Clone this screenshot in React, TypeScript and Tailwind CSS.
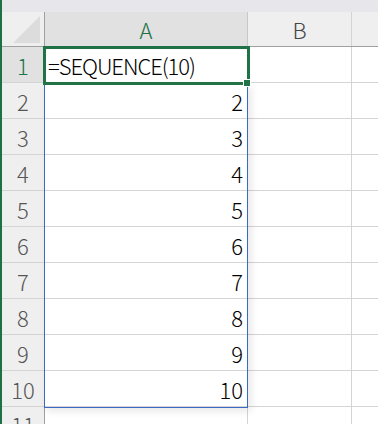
import React from "react";

const font = { fontFamily: '"Noto Sans CJK JP", "Noto Sans", sans-serif' };

export default function App() {
  const rows = [1, 2, 3, 4, 5, 6, 7, 8, 9, 10];
  return (
    <div className="w-[378px] h-[424px] overflow-hidden flex bg-white font-light" style={font}>
      <div className="w-[2px] shrink-0 bg-[#1e7145]" />
      <div className="flex-1 flex flex-col relative">
        <div className="h-[12px] shrink-0 bg-[#e6e6eb]" />
        {/* header row */}
        <div className="h-[35px] shrink-0 flex border-b border-[#a0a0a0]">
          <div className="w-[43px] shrink-0 bg-[#efefef] border-r border-[#a0a0a0] relative">
            <svg className="absolute left-[11px] top-[4px]" width="28" height="28" viewBox="0 0 28 28">
              <polygon points="0,27 27,0 27,27" fill="#dcdcdc" />
            </svg>
          </div>
          <div className="w-[203px] shrink-0 bg-[#e1e1e1] border-r border-[#c8c8c8] flex items-center justify-center text-[22px] leading-none text-[#217346]">
            A
          </div>
          <div className="w-[104px] shrink-0 bg-[#efefef] border-r border-[#d4d4d4] flex items-center justify-center text-[22px] leading-none text-[#444]">
            B
          </div>
          <div className="flex-1 bg-[#efefef]" />
        </div>
        {rows.map((r) => (
          <div key={r} className="h-[36px] shrink-0 flex border-b border-[#d4d4d4]">
            <div
              className={
                "w-[43px] shrink-0 border-r border-[#a0a0a0] flex items-center justify-center text-[22px] leading-none " +
                (r === 1 ? "bg-[#e1e1e1] text-[#217346]" : "bg-[#efefef] text-[#555]")
              }
            >
              {r}
            </div>
            <div
              className={
                "w-[203px] shrink-0 border-r border-[#d4d4d4] flex items-center text-[22px] leading-none text-black " +
                (r === 1 ? "justify-start pl-[3px] tracking-[-1.05px]" : "justify-end pr-[4px]")
              }
            >
              {r === 1 ? "=SEQUENCE(10)" : r}
            </div>
            <div className="w-[104px] shrink-0 border-r border-[#d4d4d4]" />
            <div className="flex-1" />
          </div>
        ))}
        <div className="h-[36px] shrink-0 flex">
          <div className="w-[43px] shrink-0 bg-[#efefef] border-r border-[#a0a0a0] flex items-start justify-center pt-[6px] text-[22px] leading-none text-[#555]">
            11
          </div>
          <div className="w-[203px] shrink-0 border-r border-[#d4d4d4]" />
          <div className="w-[104px] shrink-0 border-r border-[#d4d4d4]" />
          <div className="flex-1" />
        </div>

        {/* spill range border */}
        <div className="absolute left-[42px] top-[84px] w-[204px] h-[324px] border border-[#3a6bc4] shadow-[3px_3px_8px_rgba(0,0,0,0.10)] pointer-events-none" />
        {/* active cell border */}
        <div className="absolute left-[41px] top-[46px] w-[207px] h-[39px] border-[3px] border-[#217346] pointer-events-none" />
        {/* fill handle */}
        <div className="absolute left-[241px] top-[79px] w-[8px] h-[8px] bg-[#217346] border border-white pointer-events-none" />
      </div>
    </div>
  );
}
